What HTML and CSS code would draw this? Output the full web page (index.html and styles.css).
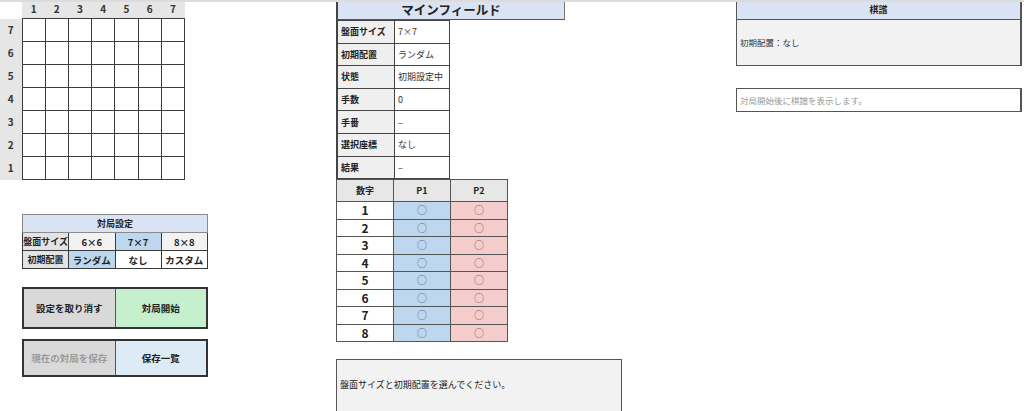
FILE: index.html
```html
<!DOCTYPE html>
<html lang="ja">
<head>
    <meta charset="UTF-8">
    <meta name="viewport" content="width=device-width, initial-scale=1.0">
    <title>マインフィールド</title>
    <link rel="stylesheet" href="styles.css">
</head>
<body>
    <div class="sheet">
        <!-- left: board and settings -->
        <div class="col-left">
            <table class="board">
                <tr>
                    <th class="corner"></th>
                    <th>1</th><th>2</th><th>3</th><th>4</th><th>5</th><th>6</th><th>7</th>
                </tr>
                <tr><th>7</th><td></td><td></td><td></td><td></td><td></td><td></td><td></td></tr>
                <tr><th>6</th><td></td><td></td><td></td><td></td><td></td><td></td><td></td></tr>
                <tr><th>5</th><td></td><td></td><td></td><td></td><td></td><td></td><td></td></tr>
                <tr><th>4</th><td></td><td></td><td></td><td></td><td></td><td></td><td></td></tr>
                <tr><th>3</th><td></td><td></td><td></td><td></td><td></td><td></td><td></td></tr>
                <tr><th>2</th><td></td><td></td><td></td><td></td><td></td><td></td><td></td></tr>
                <tr><th>1</th><td></td><td></td><td></td><td></td><td></td><td></td><td></td></tr>
            </table>

            <table class="settings">
                <tr><th colspan="4" class="settings-title">対局設定</th></tr>
                <tr>
                    <th>盤面サイズ</th>
                    <td class="opt">6×6</td>
                    <td class="opt selected">7×7</td>
                    <td class="opt">8×8</td>
                </tr>
                <tr>
                    <th>初期配置</th>
                    <td class="selected">ランダム</td>
                    <td>なし</td>
                    <td>カスタム</td>
                </tr>
            </table>

            <div class="btn-row tall">
                <button class="btn btn-gray">設定を取り消す</button>
                <button class="btn btn-green">対局開始</button>
            </div>
            <div class="btn-row">
                <button class="btn btn-gray disabled">現在の対局を保存</button>
                <button class="btn btn-blue">保存一覧</button>
            </div>
        </div>

        <!-- middle: game status -->
        <div class="col-mid">
            <div class="mid-title">マインフィールド</div>
            <table class="info">
                <tr><th>盤面サイズ</th><td>7×7</td></tr>
                <tr><th>初期配置</th><td>ランダム</td></tr>
                <tr><th>状態</th><td>初期設定中</td></tr>
                <tr><th>手数</th><td>0</td></tr>
                <tr><th>手番</th><td>–</td></tr>
                <tr><th>選択座標</th><td>なし</td></tr>
                <tr><th>結果</th><td>–</td></tr>
            </table>
            <table class="numbers">
                <tr><th>数字</th><th>P1</th><th>P2</th></tr>
                <tr><td class="num">1</td><td class="p1">○</td><td class="p2">○</td></tr>
                <tr><td class="num">2</td><td class="p1">○</td><td class="p2">○</td></tr>
                <tr><td class="num">3</td><td class="p1">○</td><td class="p2">○</td></tr>
                <tr><td class="num">4</td><td class="p1">○</td><td class="p2">○</td></tr>
                <tr><td class="num">5</td><td class="p1">○</td><td class="p2">○</td></tr>
                <tr><td class="num">6</td><td class="p1">○</td><td class="p2">○</td></tr>
                <tr><td class="num">7</td><td class="p1">○</td><td class="p2">○</td></tr>
                <tr><td class="num">8</td><td class="p1">○</td><td class="p2">○</td></tr>
            </table>
            <div class="message">盤面サイズと初期配置を選んでください。</div>
        </div>

        <!-- right: game record -->
        <div class="col-right">
            <div class="record">
                <div class="record-title">棋譜</div>
                <div class="record-body">初期配置：なし</div>
            </div>
            <div class="record-list">対局開始後に棋譜を表示します。</div>
        </div>
    </div>
</body>
</html>
```

FILE: styles.css
```css
body {
    margin: 0;
    padding: 0;
    background: #fff;
    font-family: "Noto Sans CJK JP", "Noto Sans", sans-serif;
    color: #222;
}
.sheet {
    display: flex;
    align-items: flex-start;
    height: 411px;
    overflow: hidden;
    border-top: 2px solid #dcdcdc;
    box-sizing: border-box;
}
table {
    border-collapse: collapse;
    table-layout: fixed;
}

/* left column */
.col-left {
    width: 208px;
    flex-shrink: 0;
    margin-top: -2px;
}
.board {
    width: 185px;
}
.board th {
    background: #e6e6e6;
    font-size: 10px;
    font-weight: bold;
    color: #333;
    padding: 0;
    height: 18px;
    line-height: 1;
}
.board th.corner {
    width: 22px;
    background: #fff;
}
.board tr + tr th {
    height: 22px;
}
.board td {
    border: 1px solid #3c3c3c;
    background: #fff;
    padding: 0;
    height: 22px;
}
.settings {
    width: 186px;
    margin: 34px 0 0 22px;
}
.settings th,
.settings td {
    border: 1px solid #3a3a3a;
    height: 17px;
    padding: 0;
    text-align: center;
    font-size: 9.5px;
    font-weight: bold;
    background: #fff;
}
.settings th {
    background: #e3e3e3;
    width: 45px;
    font-size: 9px;
}
.settings .settings-title {
    background: #dae3f3;
    border-color: #8a8a8a;
    height: 17px;
    width: auto;
}
.settings td.opt {
    background: #f2f2f2;
}
.settings td.selected {
    background: #bdd7ee;
}
.btn-row {
    display: flex;
    width: 186px;
    height: 38px;
    margin: 10px 0 0 22px;
    border: 2px solid #333;
    box-sizing: border-box;
}
.btn-row.tall {
    height: 42px;
    margin-top: 18px;
}
.btn {
    flex: 1;
    border: none;
    font-family: inherit;
    font-size: 9.5px;
    font-weight: bold;
    color: #222;
    padding: 0;
}
.btn + .btn {
    border-left: 1px solid #555;
}
.btn-gray {
    background: #d9d9d9;
}
.btn-gray.disabled {
    color: #9a9a9a;
}
.btn-green {
    background: #c6efce;
}
.btn-blue {
    background: #ddebf7;
}

/* middle column */
.col-mid {
    width: 229px;
    margin-left: 128px;
    flex-shrink: 0;
    margin-top: -2px;
}
.mid-title {
    height: 20px;
    line-height: 20px;
    background: #dae3f3;
    border-left: 2px solid #444;
    border-right: 1px solid #777;
    border-bottom: 1px solid #555;
    box-sizing: border-box;
    text-align: center;
    font-size: 12.5px;
    font-weight: bold;
}
.info {
    width: 114px;
}
.info th,
.info td {
    border: 1px solid #444;
    height: 21.6px;
    padding: 0 0 0 3px;
    text-align: left;
    font-size: 9px;
}
.info th {
    width: 53px;
    background: #efefef;
    border-left: 2px solid #444;
    font-weight: bold;
}
.info td {
    background: #fff;
    color: #333;
}
.numbers {
    width: 172px;
}
.numbers th,
.numbers td {
    border: 1px solid #555;
    padding: 0;
    text-align: center;
    line-height: 1;
}
.numbers th {
    height: 21px;
    background: #e7e7e7;
    font-size: 9px;
    font-weight: bold;
}
.numbers td {
    height: 16.5px;
    font-size: 10px;
    color: #666;
}
.numbers td.num {
    background: #fff;
    color: #222;
    font-size: 12px;
    font-weight: bold;
}
.numbers td.p1 {
    background: #bdd7ee;
}
.numbers td.p2 {
    background: #f4cccc;
}
.message {
    width: 286px;
    height: 60px;
    margin-top: 17px;
    background: #f2f2f2;
    border: 1px solid #555;
    box-sizing: border-box;
    padding: 18px 3px 0;
    font-size: 9px;
}

/* right column */
.col-right {
    width: 286px;
    margin-left: 171px;
    flex-shrink: 0;
    margin-top: -2px;
}
.record {
    border-left: 1px solid #555;
    border-right: 2px solid #555;
    border-bottom: 1px solid #555;
}
.record-title {
    height: 19px;
    line-height: 19px;
    background: #dae3f3;
    border-bottom: 1px solid #555;
    text-align: center;
    font-size: 9px;
    font-weight: bold;
}
.record-body {
    height: 45px;
    background: #f2f2f2;
    padding: 16px 0 0 3px;
    box-sizing: border-box;
    font-size: 8.5px;
    color: #333;
}
.record-list {
    height: 24px;
    line-height: 22px;
    margin-top: 22px;
    border: 1px solid #555;
    border-right-width: 2px;
    box-sizing: border-box;
    padding-left: 3px;
    font-size: 8.5px;
    color: #999;
}
```
